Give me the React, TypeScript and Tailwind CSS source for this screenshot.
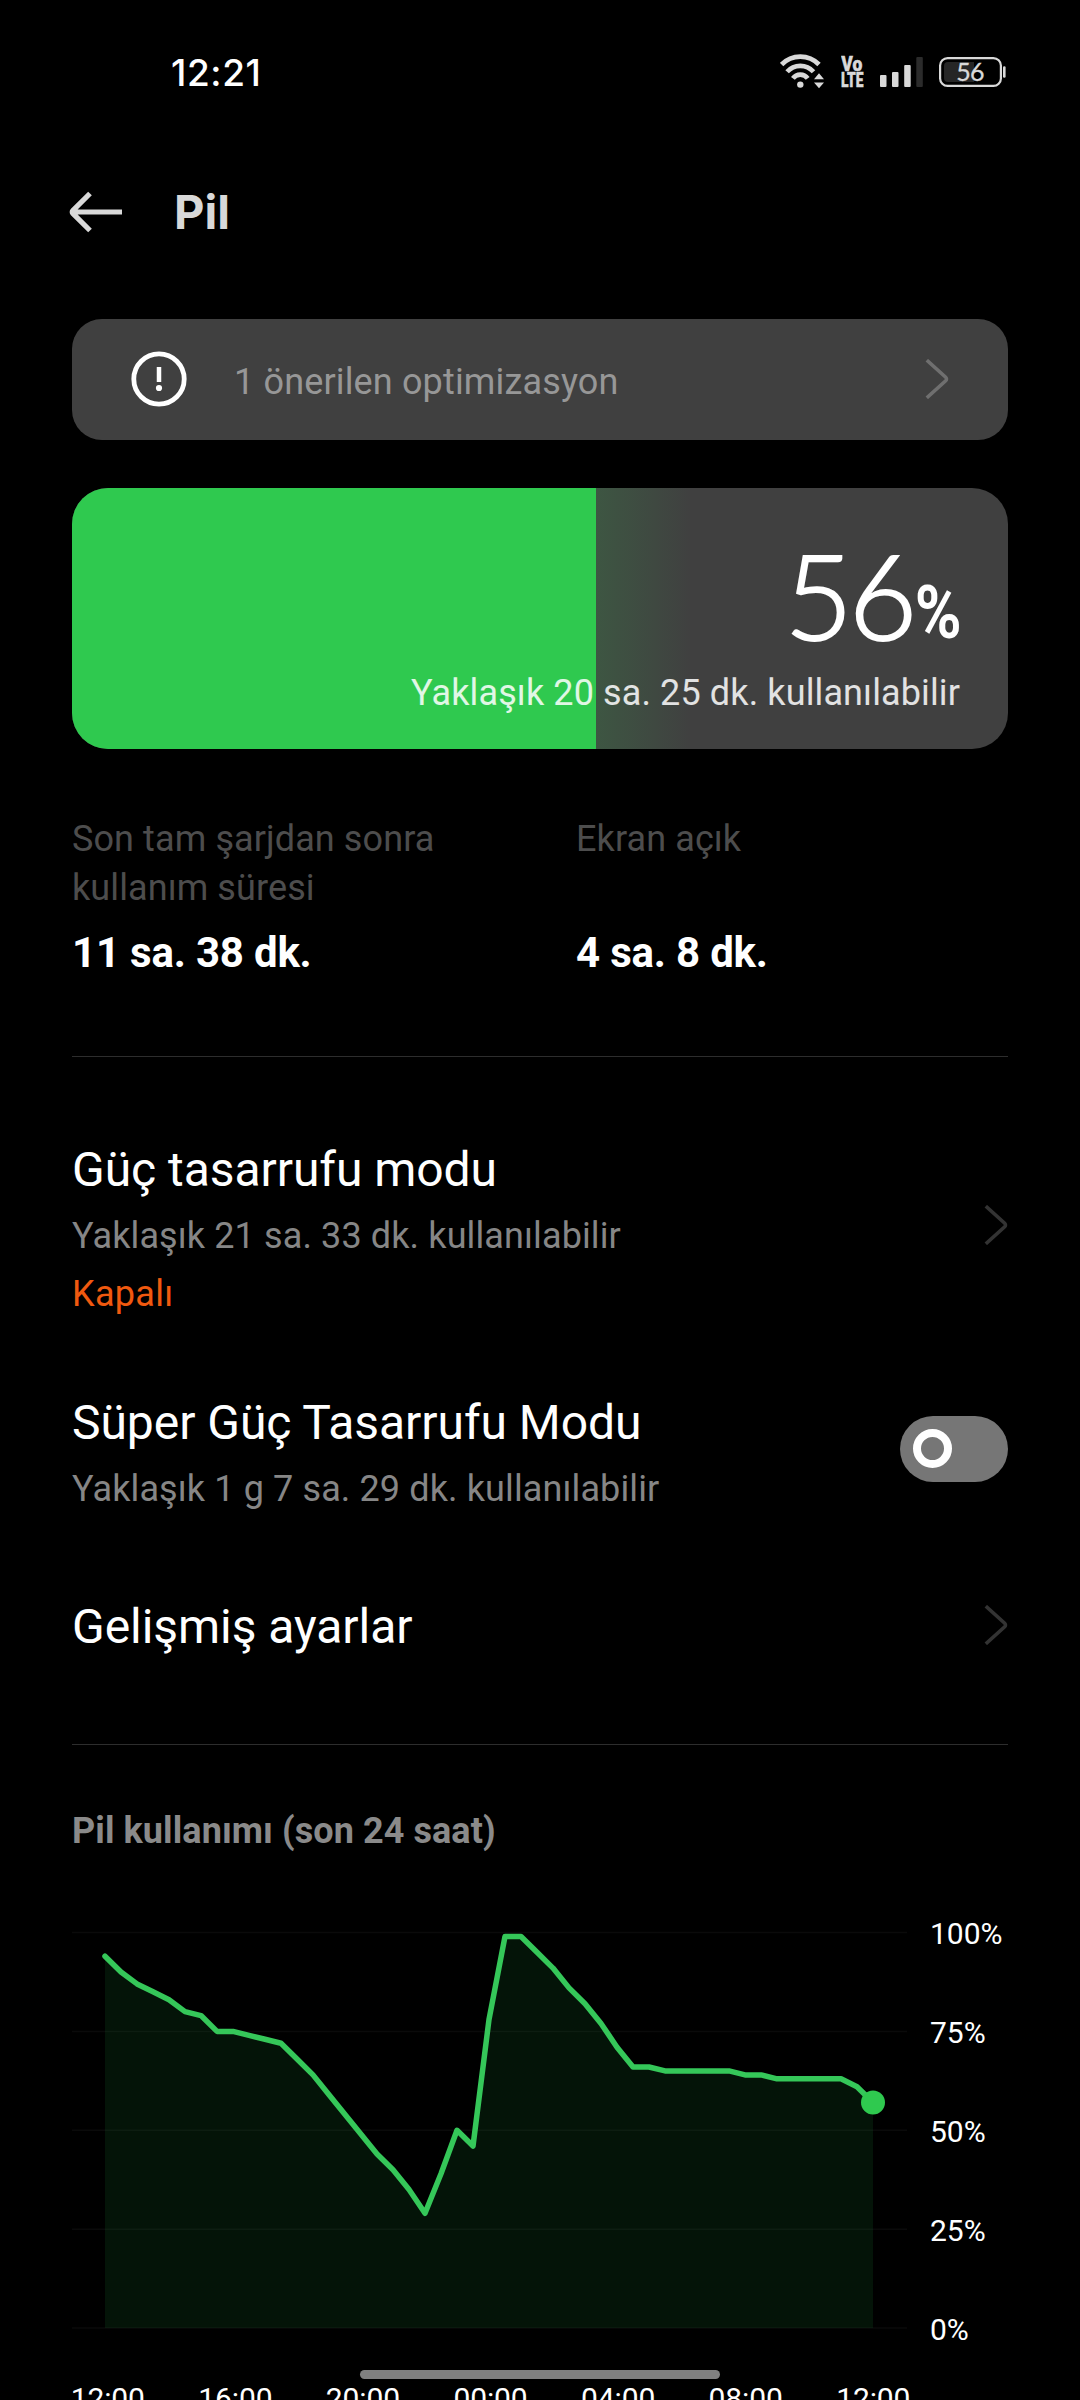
import type { ReactNode } from 'react';

// battery level every 30 minutes, oldest first
const levels = [
    94, 90, 87, 85, 83, 80, 79, 75, 75, 74, 73, 72, 68, 64, 59, 54, 49, 44, 40, 35, 29, 39, 50, 46, 78,
    99, 99, 95, 91, 86, 82, 77, 71, 66, 66, 65, 65, 65, 65, 65, 64, 64, 63, 63, 63, 63, 63, 61, 57,
];

const percents = ['100%', '75%', '50%', '25%', '0%'];
const hours = ['12:00', '16:00', '20:00', '00:00', '04:00', '08:00', '12:00'];

const batteryLevel = 56;

function WifiIcon() {
    return (
        <svg width="44" height="36" viewBox="0 0 44 36" fill="none">
            <g stroke="#d9d9d9" strokeWidth="4.7">
                <path d="M1.6 10.5A26 26 0 0 1 39 10.5" />
                <path d="M7.1 17.8A17.7 17.7 0 0 1 33.5 17.8" />
                <path d="M12.9 24.4A9.2 9.2 0 0 1 27.7 24.4" />
            </g>
            <circle cx="20.3" cy="30.6" r="3.2" fill="#d9d9d9" />
            <path d="M39 19.3l5 5.9H34zM34 28.4h10l-5 5.8z" fill="#d9d9d9" />
        </svg>
    );
}

function VolteIcon() {
    return (
        <svg width="23" height="36" viewBox="0 0 23 36" fill="#d9d9d9" stroke="#d9d9d9" strokeWidth="0.5" className="font-['Roboto'] font-black">
            <text fontSize="19.5">
                <tspan x="0.3" y="17" textLength="21" lengthAdjust="spacingAndGlyphs">Vo</tspan>
                <tspan x="0" y="33" textLength="22.5" lengthAdjust="spacingAndGlyphs">LTE</tspan>
            </text>
        </svg>
    );
}

function SignalIcon() {
    return (
        <svg width="43" height="36" viewBox="0 0 43 36" fill="#d9d9d9">
            <rect x="0" y="21" width="6.5" height="12" rx="1" />
            <rect x="12" y="18" width="6.5" height="15" rx="1" />
            <rect x="24.2" y="11" width="6.5" height="22" rx="1" />
            <rect x="36.3" y="3" width="6.5" height="30" rx="1" fill="#2b2b2b" />
        </svg>
    );
}

function BatteryIcon() {
    return (
        <svg width="67" height="36" viewBox="0 0 67 36" fill="none">
            <path d="M9 8h26v20H9a4 4 0 0 1-4-4V12a4 4 0 0 1 4-4z" fill="#262626" />
            <rect x="1.1" y="4.1" width="60.8" height="27.8" rx="7.5" stroke="#d9d9d9" strokeWidth="2.2" />
            <rect x="64" y="12.3" width="2.6" height="11.5" rx="1.2" fill="#d9d9d9" />
            <text x="31" y="27" fontSize="25" fill="#d9d9d9" stroke="#d9d9d9" strokeWidth="0.3" textAnchor="middle" className="font-['Lato'] font-normal tracking-[-0.8px]">
                {batteryLevel}
            </text>
        </svg>
    );
}

function Chevron({ className = '' }: { className?: string }) {
    return (
        <svg width="24" height="40" viewBox="0 0 24 40" fill="none" stroke="currentColor" strokeWidth="3.6" className={`shrink-0 ${className}`}>
            <path d="M1.8 1.2l18.9 17a2.5 2.5 0 0 1 0 3.6l-18.9 17" />
        </svg>
    );
}

function Stat({ label, value }: { label: string; value: string }) {
    return (
        <div>
            <p className="h-[97px] max-w-[400px] text-[36px] leading-[48.7px] tracking-[0.1px] text-[#4d4d4d]">{label}</p>
            <p className="mt-[13px] text-[42px] leading-[56px] font-bold tracking-[-0.2px]">{value}</p>
        </div>
    );
}

function Row({ title, note, status, children }: { title: string; note?: string; status?: string; children: ReactNode }) {
    return (
        <div className="flex items-center justify-between">
            <div>
                <h2 className="text-[48px] leading-[56px] tracking-[-0.05px]">{title}</h2>
                {note && <p className="mt-3.5 text-[36px] leading-[48px] tracking-[0.12px] text-[#868686]">{note}</p>}
                {status && <p className="mt-2.5 text-[36px] leading-[48px] tracking-[0.3px] text-[#f0590f]">{status}</p>}
            </div>
            {children}
        </div>
    );
}

function UsageChart() {
    const x = (i: number) => 33 + i * 16;
    const y = (p: number) => 414 - p * 3.955;
    const line = levels.map((p, i) => `${x(i)},${y(p)}`).join(' ');
    const last = levels.length - 1;

    return (
        <svg width="835" height="436" viewBox="0 0 835 436" fill="none">
            <polygon points={`${x(0)},414 ${line} ${x(last)},414`} fill="#041408" />
            {[0, 25, 50, 75, 100].map((p) => (
                <line key={p} x1="0" x2="835" y1={y(p)} y2={y(p)} stroke="#fff" strokeOpacity="0.04" strokeWidth="1.5" />
            ))}
            <polyline points={line} stroke="#35c759" strokeWidth="5.5" strokeLinecap="round" strokeLinejoin="round" />
            <circle cx={x(last)} cy={y(levels[last])} r="12" fill="#2fc94f" />
        </svg>
    );
}

export default function App() {
    return (
        <div className="relative h-[2400px] w-[1080px] overflow-hidden bg-black font-['Roboto',sans-serif] text-white">
            {/* Status bar */}
            <div className="flex h-36 items-center justify-between pr-[74px] pl-[171px]">
                <span className="pt-0.5 font-['Inter',sans-serif] text-[37px] font-medium tracking-[0.6px]">12:21</span>
                <div className="flex items-center">
                    <WifiIcon />
                    <div className="ml-[17px]"><VolteIcon /></div>
                    <div className="ml-4"><SignalIcon /></div>
                    <div className="ml-4"><BatteryIcon /></div>
                </div>
            </div>

            {/* Title bar */}
            <header className="flex h-[136px] items-center pl-[69px] text-[#d9d9d9]">
                <svg width="53" height="42" viewBox="0 0 53 42" fill="none" stroke="currentColor" strokeWidth="5.2">
                    <path d="M53 21H4M21 2.5L3.8 19.6a2 2 0 0 0 0 2.8L21 39.5" />
                </svg>
                <h1 className="ml-[52px] font-['Inter',sans-serif] text-[47px] font-bold">Pil</h1>
            </header>

            <main className="px-[72px] pt-[39px]">
                <div className="flex h-[121px] items-center rounded-[30px] bg-[#404040] pr-[59px] pl-[59px]">
                    <svg width="56" height="56" viewBox="0 0 56 56" fill="none" className="mb-px">
                        <circle cx="28" cy="28" r="25.2" stroke="#fff" strokeWidth="4.8" />
                        <path d="M28 16v15" stroke="#fff" strokeWidth="4.5" />
                        <circle cx="28" cy="37" r="3.1" fill="#fff" />
                    </svg>
                    <span className="ml-[47px] grow pt-1 text-[36px] tracking-[0.15px] text-[#979797]">1 önerilen optimizasyon</span>
                    <Chevron className="mb-px text-[#6f6f6f]" />
                </div>

                {/* Battery level card */}
                <div className="relative mt-12 h-[261px] overflow-hidden rounded-[36px] bg-[#404040]">
                    <div className="absolute inset-0 flex">
                        <div className="bg-[#2fc94f]" style={{ width: `${batteryLevel}%` }} />
                        <div className="w-24 bg-linear-to-r from-[#2fc94f]/16 to-[#2fc94f]/0" />
                    </div>
                    <div className="relative flex flex-col items-end pt-[57px] pr-12">
                        <div className="-mr-0.5 flex h-[100px] items-baseline">
                            <span className="-mr-1.5 font-['Lato',sans-serif] text-[118px] leading-[100px] font-light tracking-[-4px] [-webkit-text-stroke:2px_white]">
                                {batteryLevel}
                            </span>
                            <span className="relative -top-0.5 origin-right scale-x-[0.857] text-[74px] leading-none font-bold">%</span>
                        </div>
                        <p className="mt-[24px] text-[36px] leading-[48px] tracking-[0.12px] text-white/85">
                            Yaklaşık 20 sa. 25 dk. kullanılabilir
                        </p>
                    </div>
                </div>

                <div className="mt-[66px] grid grid-cols-[504px_1fr]">
                    <Stat label="Son tam şarjdan sonra kullanım süresi" value="11 sa. 38 dk." />
                    <Stat label="Ekran açık" value="4 sa. 8 dk." />
                </div>

                <div className="mt-[75px] h-px bg-[#2d2d2d]" />

                <section className="pt-[85px]">
                    <Row title="Güç tasarrufu modu" note="Yaklaşık 21 sa. 33 dk. kullanılabilir" status="Kapalı">
                        <Chevron className="mb-[10px] text-[#333333]" />
                    </Row>
                    <div className="mt-[77px]">
                        <Row title="Süper Güç Tasarrufu Modu" note="Yaklaşık 1 g 7 sa. 29 dk. kullanılabilir">
                            <div className="mb-[11px] flex h-[66px] w-[108px] items-center rounded-full bg-[#767676] pl-[13px]">
                                <div className="size-[39px] rounded-full border-8 border-white" />
                            </div>
                        </Row>
                    </div>
                    <div className="mt-[86px]">
                        <Row title="Gelişmiş ayarlar">
                            <Chevron className="mb-[4px] text-[#333333]" />
                        </Row>
                    </div>
                </section>

                <div className="mt-[89px] h-px bg-[#2d2d2d]" />

                {/* Last 24 hours */}
                <section className="pt-[62px]">
                    <h3 className="text-[36px] leading-[48px] font-bold tracking-[0.08px] text-[#8a8a8a]">Pil kullanımı (son 24 saat)</h3>
                    <div className="mt-[59px] flex">
                        <UsageChart />
                        <div className="ml-[23px] flex flex-col justify-between text-[30px] leading-[40px]">
                            {percents.map((p) => <span key={p}>{p}</span>)}
                        </div>
                    </div>
                    <div className="mt-[29px] -ml-7 flex w-[893px] text-[30px] leading-[40px] tracking-[-0.1px]">
                        {hours.map((h, i) => <span key={i} className="flex-1 text-center">{h}</span>)}
                    </div>
                </section>
            </main>

            {/* Gesture handle */}
            <div className="absolute top-[2370px] left-[360px] h-[9px] w-[360px] rounded-full bg-[#808080]" />
        </div>
    );
}
